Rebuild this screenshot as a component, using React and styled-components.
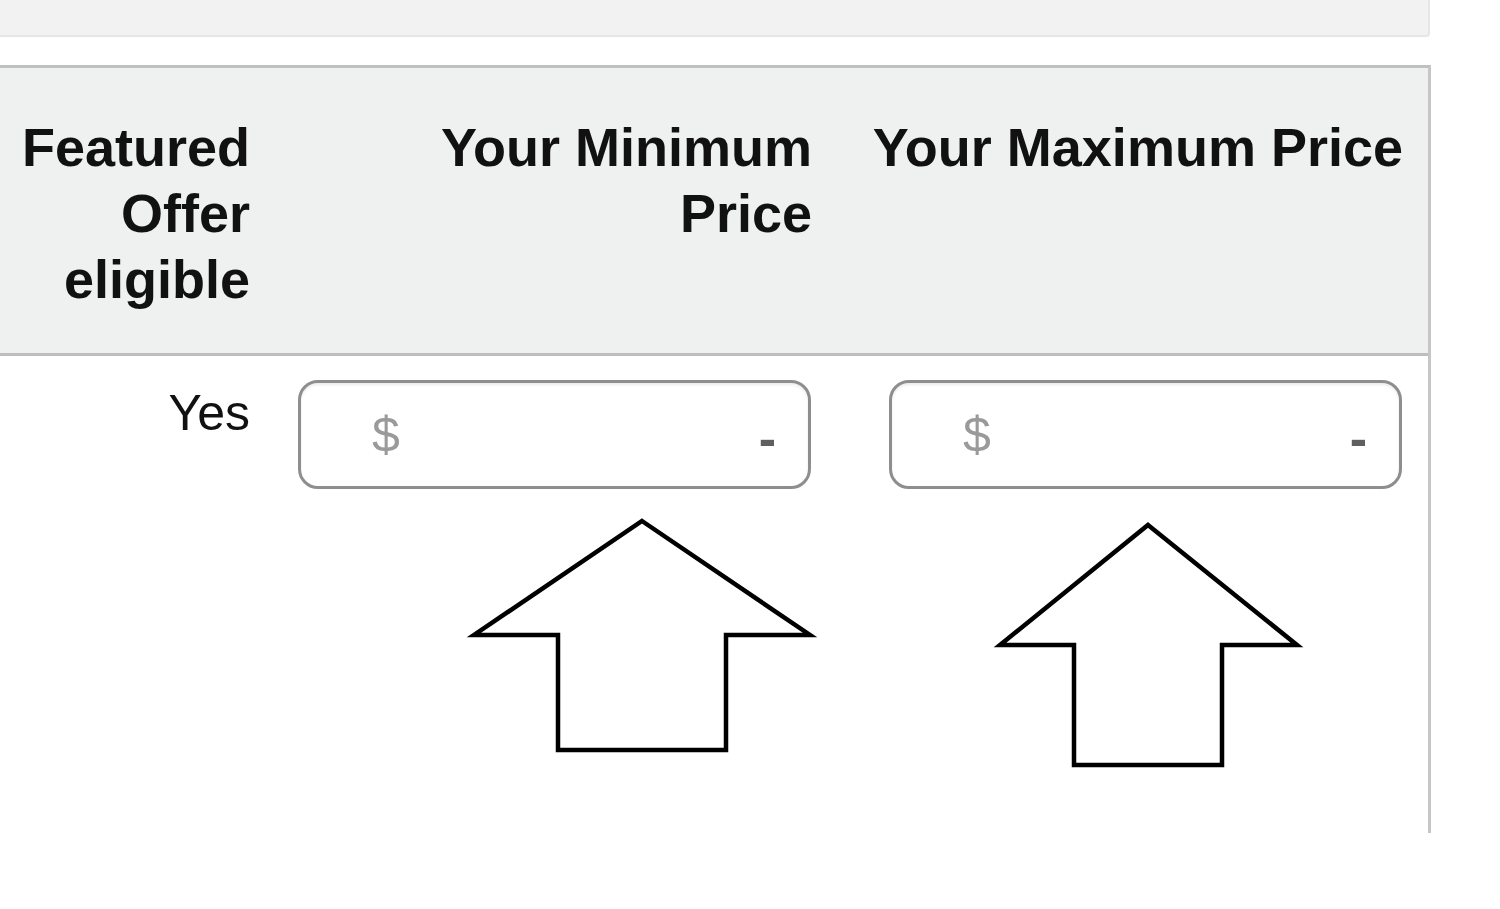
import React from "react";
import styled, { createGlobalStyle } from "styled-components";

const Global = createGlobalStyle`
  html, body { margin: 0; padding: 0; background: #ffffff; }
  body { font-family: "Liberation Sans", Arial, sans-serif; color: #111; }
`;

const Page = styled.div`
  position: relative;
  width: 1500px;
  height: 909px;
  overflow: hidden;
  background: #fff;
`;

const TopPanel = styled.div`
  width: 1430px;
  height: 37px;
  box-sizing: border-box;
  background: #f2f2f2;
  border-right: 2px solid #e6e6e6;
  border-bottom: 2px solid #e6e6e6;
  border-bottom-right-radius: 4px;
`;

const Table = styled.div`
  margin-top: 28px;
  width: 1431px;
  height: 768px;
  box-sizing: border-box;
  border-top: 3px solid #bfc1c1;
  border-right: 3px solid #c6c6c6;
  display: grid;
  grid-template-columns: 274px 576px 1fr;
  grid-template-rows: 288px 1fr;
`;

const HeadCell = styled.div`
  background: #eff1f1;
  border-bottom: 3px solid #bdbfbf;
  padding: 46px ${(p) => p.$pr}px 0 ${(p) => p.$pl}px;
  text-align: right;
  font-family: "Liberation Sans", Arial, sans-serif;
  font-weight: 700;
  font-size: 54px;
  line-height: 66px;
  color: #111;
  white-space: ${(p) => (p.$nowrap ? "nowrap" : "normal")};
`;

const BodyCell = styled.div`
  padding: ${(p) => p.$pt}px ${(p) => p.$pr}px 0 ${(p) => p.$pl}px;
  text-align: right;
`;

const CellText = styled.span`
  font-size: 50px;
  line-height: 60px;
  color: #111;
`;

const PriceInput = styled.div`
  width: 513px;
  height: 109px;
  box-sizing: border-box;
  border: 3px solid #8e8e8e;
  border-radius: 20px;
  box-shadow: inset 0 2px 3px rgba(0, 0, 0, 0.08);
  display: flex;
  align-items: center;
  justify-content: space-between;
  padding: 0 32px 0 71px;
  background: #fff;
`;

const Currency = styled.span`
  font-size: 50px;
  line-height: 60px;
  color: #9a9a9a;
`;

const Dash = styled.span`
  font-size: 52px;
  line-height: 60px;
  font-weight: 700;
  color: #5f5f5f;
  transform: translateY(3px);
`;

const Annotations = styled.svg`
  position: absolute;
  left: 0;
  top: 0;
  width: 1500px;
  height: 909px;
  pointer-events: none;
`;

const arrows = [
  "642,521 810,635 726,635 726,750 558,750 558,635 474,635",
  "1148,525 1297,645 1222,645 1222,765 1074,765 1074,645 1000,645",
];

export default function App() {
  return (
    <Page>
      <Global />
      <TopPanel />
      <Table>
        <HeadCell $pl={10} $pr={24}>Featured Offer eligible</HeadCell>
        <HeadCell $pl={130} $pr={38}>Your Minimum Price</HeadCell>
        <HeadCell $pl={10} $pr={25} $nowrap>Your Maximum Price</HeadCell>
        <BodyCell $pt={27} $pl={0} $pr={24}>
          <CellText>Yes</CellText>
        </BodyCell>
        <BodyCell $pt={24} $pl={24} $pr={0}>
          <PriceInput>
            <Currency>$</Currency>
            <Dash>-</Dash>
          </PriceInput>
        </BodyCell>
        <BodyCell $pt={24} $pl={39} $pr={0}>
          <PriceInput>
            <Currency>$</Currency>
            <Dash>-</Dash>
          </PriceInput>
        </BodyCell>
      </Table>
      <Annotations viewBox="0 0 1500 909">
        {arrows.map((pts) => (
          <polygon
            key={pts}
            points={pts}
            fill="none"
            stroke="#000"
            strokeWidth="4.5"
            strokeLinejoin="miter"
          />
        ))}
      </Annotations>
    </Page>
  );
}
